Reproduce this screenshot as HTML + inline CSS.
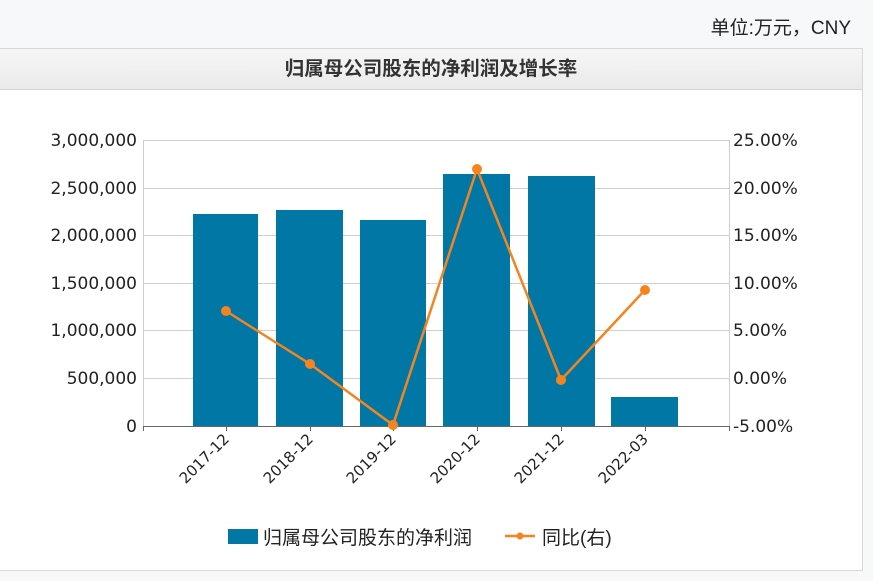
<!DOCTYPE html>
<html><head><meta charset="utf-8"><style>
body{margin:0;width:873px;height:581px;background:#f7f8fa;position:relative;overflow:hidden;font-family:"DejaVu Sans","Liberation Sans","Noto Sans CJK SC",sans-serif;}
.unit{position:absolute;right:22px;top:13px;font-size:19px;color:#222;font-family:"Liberation Sans","Noto Sans CJK SC",sans-serif;}
.box{position:absolute;left:-1px;top:48px;width:864px;height:523px;background:#fff;border:1px solid #d8d8d8;box-sizing:border-box;}
.hdr{position:absolute;left:0;top:0;right:0;height:40px;background:linear-gradient(#f6f6f6,#eaeaea);border-bottom:1px solid #d4d4d4;text-align:center;line-height:40px;font-size:19.5px;color:#333;font-weight:bold;font-family:"Liberation Sans","Noto Sans CJK SC",sans-serif;}
svg{position:absolute;left:0;top:0}
</style></head><body>
<div class="unit">单位:万元，CNY</div>
<div class="box"><div class="hdr">归属母公司股东的净利润及增长率</div></div>
<svg width="873" height="581" font-family="DejaVu Sans, Liberation Sans, sans-serif" font-size="17" fill="#222">
<g stroke="#cfcfcf" stroke-width="1">
<line x1="143" y1="140.5" x2="729" y2="140.5"/><line x1="143" y1="188.5" x2="729" y2="188.5"/><line x1="143" y1="235.5" x2="729" y2="235.5"/><line x1="143" y1="283.5" x2="729" y2="283.5"/><line x1="143" y1="330.5" x2="729" y2="330.5"/><line x1="143" y1="378.5" x2="729" y2="378.5"/>
<line x1="143.5" y1="140" x2="143.5" y2="426"/><line x1="729.5" y1="140" x2="729.5" y2="426"/>
</g>
<g fill="#0077a5">
<rect x="193" y="214" width="65" height="212"/><rect x="276" y="210" width="67" height="216"/><rect x="360" y="220" width="66" height="206"/><rect x="443" y="174" width="67" height="252"/><rect x="528" y="176" width="67" height="250"/><rect x="611" y="397" width="67" height="29"/>
</g>
<g stroke="#666"><line x1="143" y1="426.5" x2="730" y2="426.5"/>
<line x1="143.5" y1="426" x2="143.5" y2="431"/><line x1="226.5" y1="426" x2="226.5" y2="431"/><line x1="310.5" y1="426" x2="310.5" y2="431"/><line x1="393.5" y1="426" x2="393.5" y2="431"/><line x1="477.5" y1="426" x2="477.5" y2="431"/><line x1="561.5" y1="426" x2="561.5" y2="431"/><line x1="645.5" y1="426" x2="645.5" y2="431"/><line x1="729.5" y1="426" x2="729.5" y2="431"/></g>
<polyline points="226,311 310,364 393,425 477,169 561,380 645,290" fill="none" stroke="#f5841f" stroke-width="2.5"/>
<g fill="#f5841f"><circle cx="226" cy="311" r="5"/><circle cx="310" cy="364" r="5"/><circle cx="393" cy="425" r="5"/><circle cx="477" cy="169" r="5"/><circle cx="561" cy="380" r="5"/><circle cx="645" cy="290" r="5"/></g>
<g text-anchor="end">
<text x="137" y="146">3,000,000</text><text x="137" y="194">2,500,000</text><text x="137" y="241">2,000,000</text><text x="137" y="289">1,500,000</text><text x="137" y="336">1,000,000</text><text x="137" y="384">500,000</text><text x="137" y="432">0</text>
</g>
<g>
<text x="733" y="146">25.00%</text><text x="733" y="194">20.00%</text><text x="733" y="241">15.00%</text><text x="733" y="289">10.00%</text><text x="733" y="336">5.00%</text><text x="733" y="384">0.00%</text><text x="733" y="432">-5.00%</text>
</g>
<g text-anchor="end" font-size="15">
<text transform="translate(230,440) rotate(-45)">2017-12</text>
<text transform="translate(314,440) rotate(-45)">2018-12</text>
<text transform="translate(397,440) rotate(-45)">2019-12</text>
<text transform="translate(481,440) rotate(-45)">2020-12</text>
<text transform="translate(565,440) rotate(-45)">2021-12</text>
<text transform="translate(649,440) rotate(-45)">2022-03</text>
</g>
<rect x="228" y="529" width="30" height="15" fill="#0077a5"/>
<text x="263" y="544" font-size="19" font-family="Liberation Sans, Noto Sans CJK SC, sans-serif">归属母公司股东的净利润</text>
<line x1="505" y1="536" x2="535" y2="536" stroke="#f5841f" stroke-width="2.5"/><circle cx="520" cy="536" r="3.5" fill="#f5841f"/>
<text x="542" y="544" font-size="19" font-family="Liberation Sans, Noto Sans CJK SC, sans-serif">同比(右)</text>
</svg>
</body></html>
